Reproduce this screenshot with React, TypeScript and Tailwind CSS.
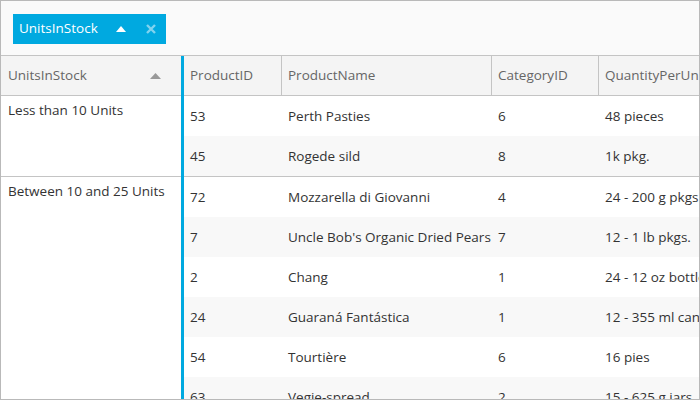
import React from "react";

const groups = [
  {
    label: "Less than 10 Units",
    rows: [
      ["53", "Perth Pasties", "6", "48 pieces"],
      ["45", "Rogede sild", "8", "1k pkg."],
    ],
  },
  {
    label: "Between 10 and 25 Units",
    rows: [
      ["72", "Mozzarella di Giovanni", "4", "24 - 200 g pkgs."],
      ["7", "Uncle Bob's Organic Dried Pears", "7", "12 - 1 lb pkgs."],
      ["2", "Chang", "1", "24 - 12 oz bottles"],
      ["24", "Guaraná Fantástica", "1", "12 - 355 ml cans"],
      ["54", "Tourtière", "6", "16 pies"],
      ["63", "Vegie-spread", "2", "15 - 625 g jars"],
    ],
  },
];

function Row({ cells, alt }: { cells: string[]; alt: boolean }) {
  return (
    <div className={`flex h-[40px] items-center ${alt ? "bg-[#f8f8f8]" : "bg-white"}`}>
      <div className="w-[98px] shrink-0 pl-[6px] whitespace-nowrap overflow-hidden">{cells[0]}</div>
      <div className="w-[210px] shrink-0 pl-[6px] whitespace-nowrap overflow-hidden">{cells[1]}</div>
      <div className="w-[107px] shrink-0 pl-[6px] whitespace-nowrap overflow-hidden">{cells[2]}</div>
      <div className="flex-1 pl-[6px] whitespace-nowrap overflow-hidden">{cells[3]}</div>
    </div>
  );
}

export default function App() {
  return (
    <div
      className="w-[700px] h-[400px] border border-[#b9b9b9] overflow-hidden flex flex-col bg-white text-[13.5px] text-[#333]"
      style={{ fontFamily: '"Open Sans", "Noto Sans", sans-serif' }}
    >
      {/* grouping panel */}
      <div className="h-[55px] shrink-0 bg-[#fafafa] border-b border-[#c4c4c4] flex items-center pl-[12px] pt-[1px]">
        <div className="h-[30px] w-[153px] bg-[#00a9e0] text-white flex items-center pl-[6px]">
          <span className="w-[78px] whitespace-nowrap">UnitsInStock</span>
          <svg className="ml-[19px]" width="10" height="6" viewBox="0 0 10 6">
            <polygon points="0,6 5,0 10,6" fill="#ffffff" />
          </svg>
          <svg className="ml-[20px]" width="10" height="10" viewBox="0 0 10 10">
            <path d="M1 1 L9 9 M9 1 L1 9" stroke="#80d3ef" strokeWidth="2.4" />
          </svg>
        </div>
      </div>

      <div className="flex flex-1 min-h-0">
        {/* group column */}
        <div className="w-[180px] shrink-0 flex flex-col">
          <div className="h-[40px] shrink-0 bg-[#f4f4f4] border-b border-[#c4c4c4] flex items-center pl-[7px] pr-[20px] text-[#666]">
            <span className="flex-1">UnitsInStock</span>
            <svg width="11" height="6" viewBox="0 0 11 6">
              <polygon points="0,6 5.5,0 11,6" fill="#999999" />
            </svg>
          </div>
          {groups.map((g, i) => (
            <div
              key={g.label}
              className={`shrink-0 pl-[7px] pt-[4px] leading-5 ${i === 0 ? "border-b border-[#c4c4c4]" : ""}`}
              style={{ height: g.rows.length * 40 + (i === 0 ? 1 : 0) }}
            >
              {g.label}
            </div>
          ))}
        </div>

        <div className="w-[3px] shrink-0 bg-[#00a9e0]" />

        {/* data columns */}
        <div className="flex-1 flex flex-col min-w-0">
          <div className="h-[40px] shrink-0 bg-[#f4f4f4] border-b border-[#c4c4c4] flex text-[#666]">
            <div className="w-[98px] shrink-0 border-r border-[#c4c4c4] flex items-center pl-[6px]">ProductID</div>
            <div className="w-[210px] shrink-0 border-r border-[#c4c4c4] flex items-center pl-[6px]">ProductName</div>
            <div className="w-[107px] shrink-0 border-r border-[#c4c4c4] flex items-center pl-[6px]">CategoryID</div>
            <div className="flex-1 flex items-center pl-[6px] whitespace-nowrap overflow-hidden">QuantityPerUnit</div>
          </div>
          {groups.map((g, i) => (
            <div key={g.label} className={i === 0 ? "border-b border-[#c4c4c4]" : ""}>
              {g.rows.map((r, j) => (
                <Row key={r[0]} cells={r} alt={j % 2 === 1} />
              ))}
            </div>
          ))}
        </div>
      </div>
    </div>
  );
}
